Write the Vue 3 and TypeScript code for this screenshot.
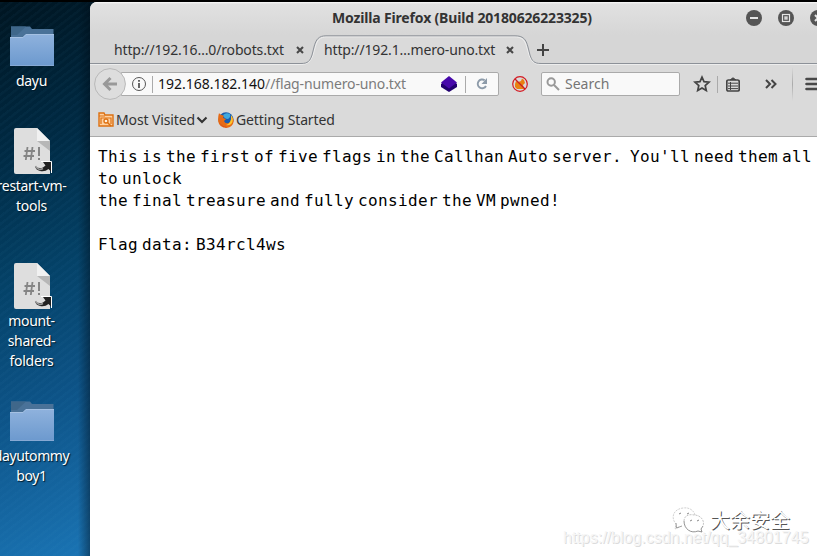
<script setup lang="ts">
interface Shortcut {
  kind: 'folder' | 'script'
  slot: string
  lines: string[]
}

const shortcuts: Shortcut[] = [
  { kind: 'folder', slot: 'first', lines: ['dayu'] },
  { kind: 'script', slot: 'second', lines: ['restart-vm-', 'tools'] },
  { kind: 'script', slot: 'third', lines: ['mount-', 'shared-', 'folders'] },
  { kind: 'folder', slot: 'fourth', lines: ['dayutommy', 'boy1'] },
]

const fileLines: string[] = [
  "This is the first of five flags in the Callhan Auto server.  You'll need them all",
  'to unlock',
  'the final treasure and fully consider the VM pwned!',
  '',
  'Flag data: B34rcl4ws',
]
</script>

<template>
  <div class="screen">
    <aside class="desktop">
      <div v-for="item in shortcuts" :key="item.slot" class="shortcut" :class="item.slot">
        <svg v-if="item.kind === 'folder'" class="folder" width="44" height="40" viewBox="0 0 44 40">
          <defs>
            <linearGradient id="folderFront" x1="0" y1="0" x2="0" y2="1">
              <stop offset="0" stop-color="#8fb2dd" />
              <stop offset="1" stop-color="#6c99ce" />
            </linearGradient>
          </defs>
          <path d="M1 0.5H20L22 3H43.5V12H1Z" fill="#4a7298" />
          <path d="M1 0.5H16L7 9H1Z" fill="#3f678a" />
          <path d="M0 11H13L16 8H44V40H0Z" fill="url(#folderFront)" />
          <path d="M0 11.5H13L16 8.5H44" fill="none" stroke="#a5c1e3" />
          <path d="M0 39.5H44" stroke="#87a9d4" />
        </svg>
        <svg v-else class="paper" width="40" height="46" viewBox="0 0 40 46">
          <path d="M2 0H23L36 13V46H2Q0 46 0 44V2Q0 0 2 0Z" fill="#dedede" />
          <path d="M23 13H36V23Z" fill="#b7b7b7" />
          <path d="M23 0L36 13H23Z" fill="#f1f1f1" />
          <g fill="none" stroke="#858585" stroke-width="1.8">
            <path d="M13.5 19L11.8 32M18.5 19L16.8 32M10.5 23H21M9.5 28H20" />
            <path d="M25 19V28M25 30V32" stroke-width="2" />
          </g>
          <path d="M29 34H37.5V44L34.5 41Q31 44 26 43Q22 42 21 38.5Q25 41 29 39.5L31.5 37.5Z" fill="#222" />
          <path d="M21.5 38Q24 43 29 40.5" fill="none" stroke="#999" stroke-width="1.6" />
          <path d="M27 33.5H37.5V45" fill="none" stroke="#fff" />
        </svg>
        <span v-for="line in item.lines" :key="line" class="caption">{{ line }}</span>
      </div>
    </aside>

    <main class="window">
      <header class="titlebar">
        <span class="title">Mozilla Firefox (Build 20180626223325)</span>
        <svg class="controls" width="80" height="16" viewBox="0 0 80 16">
          <g fill="#555">
            <circle cx="8" cy="8" r="8" />
            <circle cx="40" cy="8" r="8" />
            <circle cx="72" cy="8" r="8" />
          </g>
          <g fill="none" stroke="#e5e5e5" stroke-width="2">
            <path d="M4 8H12M69 5L75 11M75 5L69 11" />
            <rect x="36.5" y="4.5" width="7" height="7" stroke-width="1.2" />
          </g>
          <rect x="38.3" y="6.3" width="3.4" height="3.4" fill="#d6d6d6" />
        </svg>
      </header>

      <nav class="tabs">
        <svg class="tabshape" width="727" height="30" viewBox="0 0 727 30">
          <path d="M0 28.5H211C218 28.5 220 26 222 20L224 12C226 4 229 .8 236 .8H425C433 .8 436 4 438 12L440 20C442 26 444 28.5 451 28.5H727V30H0Z" fill="#dadada" />
          <path d="M0 29.5H211C218 29.5 221 26 223 20L225 13C227 5 230 1.8 237 1.8H424C432 1.8 435 5 437 13L439 20C441 26 444 29.5 451 29.5H727" fill="none" stroke="#ededed" />
          <path d="M0 28.5H211C218 28.5 220 26 222 20L224 12C226 4 229 .8 236 .8H425C433 .8 436 4 438 12L440 20C442 26 444 28.5 451 28.5H727" fill="none" stroke="#8c9198" />
        </svg>
        <span class="tab">http://192.16…0/robots.txt</span>
        <svg class="close close-one" width="8" height="8" viewBox="0 0 8 8"><path d="M1 1L7 7M7 1L1 7" /></svg>
        <span class="tab">http://192.1…mero-uno.txt</span>
        <svg class="close" width="8" height="8" viewBox="0 0 8 8"><path d="M1 1L7 7M7 1L1 7" /></svg>
        <svg class="plus" width="12" height="12" viewBox="0 0 12 12"><path d="M6 0V12M0 6H12" /></svg>
      </nav>

      <div class="toolbar">
        <svg class="back" width="32" height="32" viewBox="0 0 32 32">
          <circle cx="16" cy="16" r="15.4" fill="#dddddd" stroke="#b8b8b8" />
          <path d="M16.5 10L10.5 16L16.5 22M11 16H23" fill="none" stroke="#999" stroke-width="3" />
        </svg>
        <div class="address">
          <svg class="info" width="16" height="16" viewBox="0 0 16 16">
            <circle cx="8" cy="8" r="6.5" fill="none" stroke="#555" />
            <path d="M8 7V12M8 4V5.7" stroke="#555" stroke-width="1.8" />
          </svg>
          <i class="bar"></i>
          <span class="url"><b>192.168.182.140</b>//flag-numero-uno.txt</span>
          <svg class="cube" width="16" height="16" viewBox="0 0 16 16">
            <path d="M0 8L8 1L16 8V11L8 16L0 11Z" fill="#21006f" />
            <path d="M8 0L16 6.5L8 12.5L0 6.5Z" fill="#4608aa" />
          </svg>
          <i class="bar bar-two"></i>
          <svg class="reload" width="12" height="12" viewBox="0 0 12 12">
            <path d="M8.7 2.3A4.4 4.4 0 1 0 10 8" fill="none" stroke="#8d9ba9" stroke-width="1.9" />
            <path d="M11 0V6H5.5Z" fill="#8d9ba9" />
          </svg>
        </div>
        <svg class="blocked" width="16" height="16" viewBox="0 0 16 16">
          <path d="M3 8L4 5L6 6L9 5L10 2.5L12 4L13 7L11 9L12 13H5L3 11Z" fill="#e98112" />
          <circle cx="8" cy="8" r="7.3" fill="none" stroke="#d41922" stroke-width="1.2" />
          <path d="M3 3L13 13" stroke="#c91b25" stroke-width="1.3" />
        </svg>
        <div class="search">
          <svg width="14" height="14" viewBox="0 0 14 14" fill="none" stroke="#999" stroke-width="2">
            <circle cx="5.2" cy="5" r="3.7" /><path d="M8 8L13 13" />
          </svg>
          <span>Search</span>
        </div>
        <svg class="star" width="18" height="18" viewBox="0 0 18 18">
          <path d="M9 2.2L11 6.7L16 7.2L12.2 10.5L13.3 15.5L9 12.9L4.7 15.5L5.8 10.5L2 7.2L7 6.7Z" fill="none" stroke="#444" stroke-width="1.7" />
        </svg>
        <i class="bar tool-bar"></i>
        <svg class="list" width="14" height="15" viewBox="0 0 14 15" fill="none" stroke="#444">
          <path d="M4 3L7 .8L10 3" fill="#444" />
          <rect x=".8" y="3" width="12.4" height="11" rx="1.5" stroke-width="1.7" />
          <path d="M2 6.2H12M2 9H12M2 11.6H12M4.5 5V13" />
        </svg>
        <svg class="more" width="12" height="10" viewBox="0 0 12 10">
          <path d="M1 1L5 5L1 9M6.5 1L10.5 5L6.5 9" fill="none" stroke="#444" stroke-width="2" />
        </svg>
        <i class="divider"></i>
        <svg class="menu" width="16" height="14" viewBox="0 0 16 14">
          <path d="M1.5 2H16M1.5 7H16M1.5 12H16" stroke="#484848" stroke-width="2.6" stroke-linecap="round" />
        </svg>
      </div>

      <div class="bookmarks">
        <svg class="visited" width="16" height="15" viewBox="0 0 16 15">
          <path d="M1 14V1H6L7 3H15V14Z" fill="#ffd1a1" stroke="#dd7010" stroke-width="1.4" />
          <path d="M1 4H7M3 12V6H13V12" fill="none" stroke="#dd7010" stroke-width="1.2" />
          <circle cx="8" cy="9" r="2" fill="#fff0de" stroke="#dd7010" stroke-width="1.3" />
          <path d="M9.5 10.5L13 14" stroke="#dd7010" stroke-width="1.5" />
        </svg>
        <span class="most">Most Visited</span>
        <svg class="chevron" width="12" height="8" viewBox="0 0 12 8"><path d="M1.5 1.5L6 6L10.5 1.5" fill="none" stroke="#333" stroke-width="2.1" /></svg>
        <svg class="fox" width="16" height="16" viewBox="0 0 16 16">
          <circle cx="8" cy="7.8" r="7.5" fill="#175cae" />
          <path d="M5 3Q8 0 12 2Q13 5 10 7Q6 7 5 3Z" fill="#40a9df" />
          <path d="M1 1Q2 3 4 3L6 4L5 6L8 7L6 9Q7 12 11 11Q14 9 13 4Q16 6 15.8 9Q15 15 8.5 16Q1.5 16 .2 9.5Q-.2 5 1 1Z" fill="#e66b16" />
          <path d="M13 3Q16 7 14 11Q12 14 8 13Q14 11 13 3Z" fill="#ffc52b" />
          <path d="M1 10Q4 15 9 15Q4 16 1 10Z" fill="#c92f24" />
        </svg>
        <span>Getting Started</span>
      </div>

      <section class="document">
        <p v-for="(line, index) in fileLines" :key="index">{{ line }}</p>
      </section>
    </main>

    <div class="signature">
      <svg width="34" height="28" viewBox="0 0 34 28" fill="none">
        <path d="M7 21L3 23L4 18C-2 11 2 3 11 2C18 1 22 5 23 9" stroke="#bbb" stroke-dasharray="2 1" stroke-width=".7" />
        <path d="M4 17L4.5 22L10 20" stroke="#888" stroke-width=".8" />
        <path d="M12 15C12 9 18 8 22 9C29 9 33 15 31 20" stroke="#aaa" stroke-dasharray="2 1" stroke-width=".7" />
        <path d="M31 20L29 23L30 26L26 25C19 28 12 23 12 15" stroke="#777" stroke-width=".8" />
        <path d="M7 8L9 7M15 8L17 7M18 15L20 14M25 15L27 14" stroke="#888" />
      </svg>
      <span>大余安全</span>
    </div>
    <div class="watermark">https://blog.csdn.net/qq_34801745</div>
  </div>
</template>

<style>
body { margin: 0; overflow: hidden; }
</style>

<style scoped>
* { box-sizing: border-box; }
svg { display: block; flex: none; }
.screen {
  position: relative;
  width: 817px;
  height: 556px;
  display: flex;
  overflow: hidden;
  border-top: 2px solid #000;
  font: 14px/20px "Noto Sans", sans-serif;
  letter-spacing: -.13px;
  color: #333;
  background: repeating-linear-gradient(142deg, rgba(80, 160, 210, .04) 0 2px, transparent 3px 6px),
    linear-gradient(160deg, #001521 0, #002b45 150px, #044268 270px, #0d5387 390px, #1669a5 500px, #1c7abd 580px);
  background-size: 90px 556px;
}
.desktop {
  width: 90px;
  flex: none;
  background: linear-gradient(90deg, transparent 78px, rgba(0, 10, 20, .42) 90px);
}
.shortcut { width: 64px; display: flex; flex-direction: column; align-items: center; }
.first { padding-top: 24px; height: 126px; }
.second { height: 135px; }
.third { height: 138px; }
.folder { margin-bottom: 5px; }
.paper { margin-left: 4px; margin-bottom: 2px; }
.caption { margin-right: 1px; color: #fff; white-space: nowrap; letter-spacing: -.3px; text-shadow: 1px 1px 1px #001624; }
.fourth .caption { letter-spacing: -.4px; }
.window {
  width: 727px;
  height: 554px;
  flex: none;
  border-radius: 7px 0 0 0;
  overflow: hidden;
  background: #fff;
}
.titlebar {
  height: 33px;
  padding: 8px 0 0 242px;
  display: flex;
  background: linear-gradient(#fafafa 0, #e1e1e1 2px, #d6d6d6 33px);
}
.title { flex: none; width: 414px; line-height: 16px; font-weight: 700; letter-spacing: -.16px; white-space: nowrap; }
.tabs { position: relative; height: 29px; display: flex; align-items: center; padding-left: 24px; background: #d6d6d6; }
.tabshape { position: absolute; left: 0; top: 0; }
.tab, .close, .plus { position: relative; }
.tab { width: 182px; white-space: nowrap; letter-spacing: -.15px; }
.close { fill: none; stroke: #484848; stroke-width: 2.1; }
.close-one { margin-right: 20px; }
.plus { margin-left: 23px; fill: none; stroke: #444; stroke-width: 2; }
.toolbar { height: 40px; display: flex; align-items: center; padding-left: 4px; background: #dadada; }
.back { position: relative; }
.address { flex: none; width: 378px; height: 24px; margin-left: -5px; padding-left: 10px; display: flex; align-items: center; border: 1px solid #aaa; border-radius: 0 2px 2px 0; background: #f9f9f9; }
.info { margin-left: -1px; }
.bar { display: block; flex: none; width: 1px; height: 17px; margin-left: 5px; background: #aaa; }
.url { flex: none; width: 283px; margin-left: 5px; color: #7c7c7c; white-space: nowrap; }
.url b { font-weight: 400; color: #111; letter-spacing: -.02px; }
.bar-two { margin-left: 8px; }
.reload { margin-left: 10px; }
.blocked { margin-left: 13px; }
.search { flex: none; width: 139px; height: 24px; margin-left: 13px; padding-left: 4px; border: 1px solid #aaa; border-radius: 2px; display: flex; align-items: center; gap: 5px; color: #757575; background: #f9f9f9; letter-spacing: 0; }
.star { margin-left: 13px; }
.tool-bar { margin-left: 6px; }
.list { margin-left: 8px; }
.more { margin-left: 25px; }
.divider { display: block; flex: none; width: 1px; height: 34px; margin-left: 15px; background: linear-gradient(transparent, #aaa, transparent); }
.menu { margin-left: 12px; }
.bookmarks { height: 33px; padding: 0 0 1px 8px; display: flex; align-items: center; border-bottom: 1px solid #aaa; background: #dadada; }
.most { width: 80px; margin-left: 2px; white-space: nowrap; }
.chevron { margin-top: 1px; margin-right: 10px; }
.fox { margin-right: 2px; }
.document { padding: 9px 0 0 8px; }
.document p { height: 22px; margin: 0; font: 16px/22px "DejaVu Sans Mono", monospace; letter-spacing: .367px; word-spacing: -6px; white-space: pre; color: #000; }
.signature { position: absolute; left: 672px; top: 503px; display: flex; align-items: center; gap: 4px; }
.signature span { font: 20px/29px "Noto Sans CJK SC", sans-serif; letter-spacing: 0; color: #fff; text-shadow: 1px 1px 0 #555; }
.watermark { position: absolute; left: 563px; top: 526px; font: 16px/20px "Liberation Sans", sans-serif; letter-spacing: 0; color: #f6f6f6; text-shadow: 1px 1px 0 #dcdcdc; white-space: nowrap; }
</style>
